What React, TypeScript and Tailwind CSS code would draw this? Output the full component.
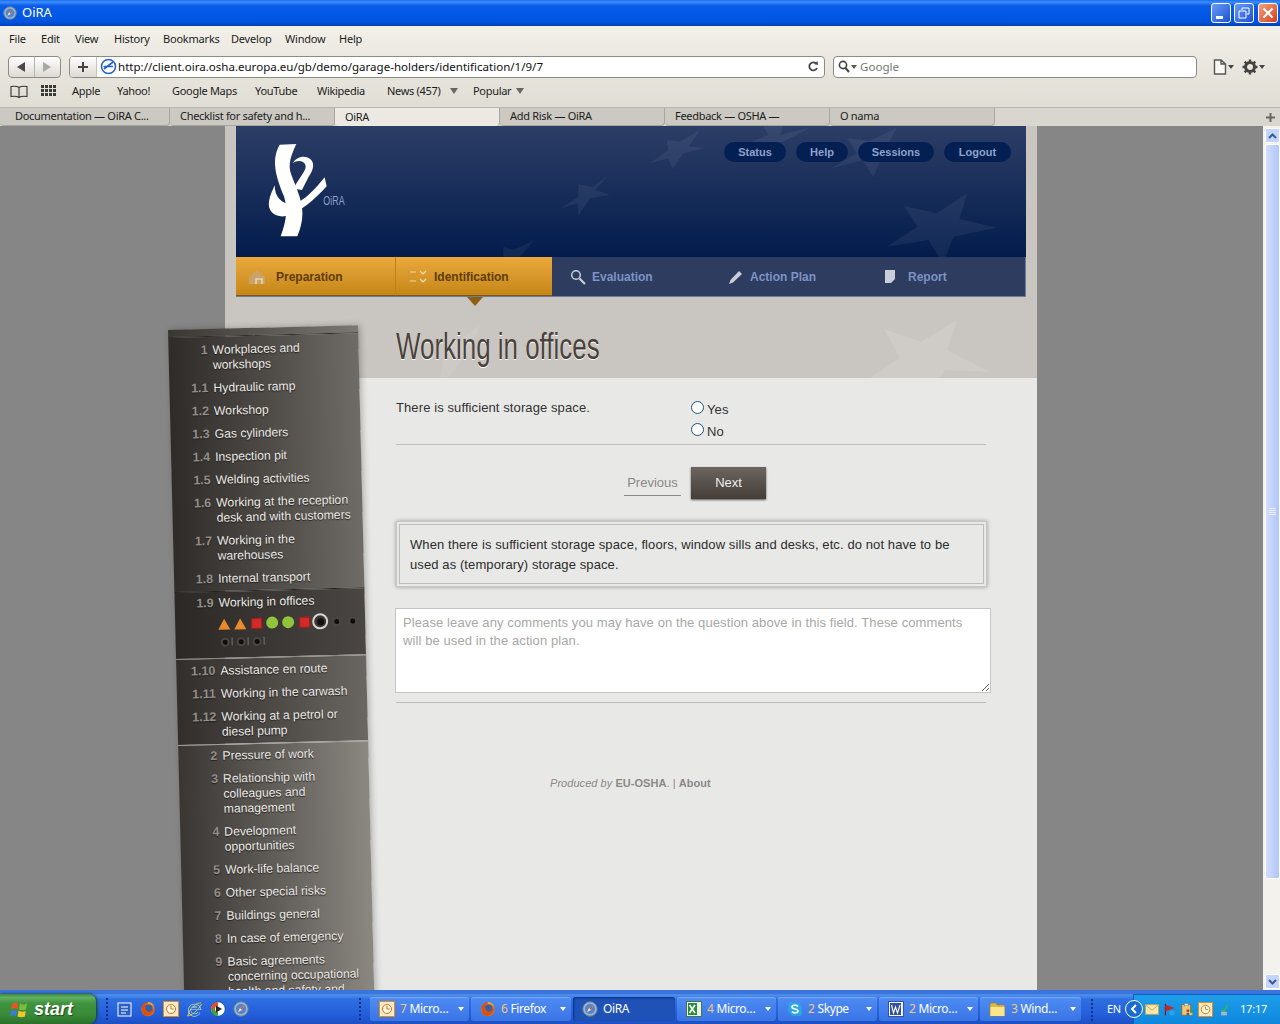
import React from "react";

const pts = (ox: number, oy: number, k: number, list: number[][], lx: number, ly: number) =>
  list.map(([x, y]) => `${ox + x / k - lx},${oy + y / k - ly}`).join(" ");

const Safari = ({ s = 16 }: { s?: number }) => (
  <svg width={s} height={s} viewBox="0 0 16 16" className="shrink-0">
    <circle cx="8" cy="8" r="7.2" fill="#9fb4c9" stroke="#6d7f94" />
    <circle cx="8" cy="8" r="5" fill="#4f86c9" />
    <path d="M11 5 L9 9 L5 11 L7 7 Z" fill="#e9edf2" />
    <path d="M11 5 L9 9 L7 7 Z" fill="#d9482f" />
  </svg>
);
const Firefox = ({ s = 16 }: { s?: number }) => (
  <svg width={s} height={s} viewBox="0 0 16 16" className="shrink-0">
    <circle cx="8" cy="8.5" r="6.8" fill="#e8701a" />
    <circle cx="8.5" cy="7.5" r="4" fill="#3a5fa8" />
    <path d="M2 5 C3 2 6 1 8 1 C6 3 5 4 5 6 C6 12 11 12 14 7 C14 12 10 15 7 15 C3 15 1 10 2 5 Z" fill="#d9530f" />
    <path d="M8 1 C11 1 14 3 14.5 7 C13 4 11 3 8 3 Z" fill="#f4a428" />
  </svg>
);
const ClockBox = ({ s = 16 }: { s?: number }) => (
  <svg width={s} height={s} viewBox="0 0 16 16" className="shrink-0">
    <rect x="0.5" y="0.5" width="15" height="15" fill="#fbe9c4" stroke="#e48a1a" />
    <circle cx="8" cy="8" r="4.5" fill="#fff6e0" stroke="#c9771a" />
    <path d="M8 5 V8 H10.5" stroke="#c9771a" fill="none" />
  </svg>
);
const IE = () => (
  <svg width="17" height="17" viewBox="0 0 17 17" className="shrink-0">
    <path d="M13 11.5 A5 5 0 1 1 13.3 7.5 H4.5" fill="none" stroke="#cfe6ff" strokeWidth="3" />
    <path d="M13 11.5 A5 5 0 1 1 13.3 7.5 H4.5" fill="none" stroke="#1f74d8" strokeWidth="2" />
    <path d="M15 2 C11 1 3 7 1.8 15 C5 14.5 13 9 15.5 3" fill="none" stroke="#efc230" strokeWidth="1" />
  </svg>
);
const Media = () => (
  <svg width="16" height="16" viewBox="0 0 16 16" className="shrink-0">
    <circle cx="8" cy="8" r="7.3" fill="#fff" stroke="#1e4fa0" />
    <path d="M1 8 A7 7 0 0 1 8 1 V5 A3 3 0 0 0 5 8 Z" fill="#e0502a" />
    <path d="M8 15 A7 7 0 0 1 1 8 H5 A3 3 0 0 0 8 11 Z" fill="#3aa040" />
    <path d="M6 4.5 L12 8 L6 11.5 Z" fill="#222" />
  </svg>
);
const Excel = () => (
  <svg width="16" height="16" viewBox="0 0 16 16" className="shrink-0">
    <rect x="0.5" y="0.5" width="15" height="15" fill="#e8f2e4" stroke="#46774b" />
    <rect x="2" y="2" width="9" height="12" fill="#2c8a3f" />
    <path d="M3.5 4 L9 12 M9 4 L3.5 12" stroke="#fff" strokeWidth="1.6" />
  </svg>
);
const Skype = () => (
  <svg width="16" height="16" viewBox="0 0 16 16" className="shrink-0">
    <circle cx="8" cy="8" r="7" fill="#29a6e6" />
    <circle cx="4" cy="4" r="3" fill="#29a6e6" />
    <circle cx="12" cy="12" r="3" fill="#29a6e6" />
    <path d="M11 5.5 C9 3.5 5 4 5 6 C5 8.5 11 7.5 11 10 C11 12 7 12.5 5 10.5" fill="none" stroke="#fff" strokeWidth="1.7" />
  </svg>
);
const Word = () => (
  <svg width="16" height="16" viewBox="0 0 16 16" className="shrink-0">
    <rect x="0.5" y="0.5" width="15" height="15" fill="#f0f4fb" stroke="#39509a" />
    <rect x="2" y="2" width="11" height="12" fill="#34519f" />
    <path d="M3.5 4 L5.5 12 L7.5 6 L9.5 12 L12 4" stroke="#fff" fill="none" strokeWidth="1.1" />
  </svg>
);
const Folder = () => (
  <svg width="17" height="15" viewBox="0 0 17 15" className="shrink-0">
    <path d="M1 3 L2 1 H7 L8 3 H15.5 V14 H1 Z" fill="#e0b73e" stroke="#a9852a" strokeWidth="0.7" />
    <rect x="1.5" y="5" width="14" height="9" fill="#fbe58a" />
  </svg>
);

const Sep = ({ cls = "" }: { cls?: string }) => (
  <div className={`flex flex-col gap-[2px] w-[2px] ${cls}`}>
    {[0, 1, 2, 3, 4, 5].map((i) => (
      <span key={i} className="w-[2px] h-[2px] bg-[#0d2f8a]" />
    ))}
  </div>
);

const TaskBtn = ({ icon, n, label, active, w = 99 }: { icon: React.ReactNode; n?: string; label: string; active?: boolean; w?: number }) => (
  <div
    style={{ width: w }}
    className={`h-[24px] rounded-[3px] flex items-center pl-[9px] pr-[5px] text-[12px] tracking-[-0.4px] text-white gap-[5px] shrink-0 ${
      active ? "bg-[#1e52b7] shadow-[inset_1px_1px_2px_#0f2f80]" : "bg-gradient-to-b from-[#4f8cf2] to-[#3a74e6] shadow-[inset_0_1px_0_#78a8f5]"
    }`}
  >
    {icon}
    <span className="whitespace-nowrap">
      {n && <span className="text-[#f6c77d] mr-[3px]">{n}</span>}
      {label}
    </span>
    {!active && <span className="ml-auto w-0 h-0 border-x-[3px] border-x-transparent border-t-[4px] border-t-white" />}
  </div>
);

type Row = { n: string; t: string[] };
const g1: Row[] = [
  { n: "1", t: ["Workplaces and", "workshops"] },
  { n: "1.1", t: ["Hydraulic ramp"] },
  { n: "1.2", t: ["Workshop"] },
  { n: "1.3", t: ["Gas cylinders"] },
  { n: "1.4", t: ["Inspection pit"] },
  { n: "1.5", t: ["Welding activities"] },
  { n: "1.6", t: ["Working at the reception", "desk and with customers"] },
  { n: "1.7", t: ["Working in the", "warehouses"] },
  { n: "1.8", t: ["Internal transport"] },
];
const g2: Row[] = [
  { n: "1.10", t: ["Assistance en route"] },
  { n: "1.11", t: ["Working in the carwash"] },
  { n: "1.12", t: ["Working at a petrol or", "diesel pump"] },
];
const g3: Row[] = [
  { n: "2", t: ["Pressure of work"] },
  { n: "3", t: ["Relationship with", "colleagues and", "management"] },
  { n: "4", t: ["Development", "opportunities"] },
  { n: "5", t: ["Work-life balance"] },
  { n: "6", t: ["Other special risks"] },
  { n: "7", t: ["Buildings general"] },
  { n: "8", t: ["In case of emergency"] },
  { n: "9", t: ["Basic agreements", "concerning occupational", "health and safety and"] },
];

const SideRow = ({ r }: { r: Row }) => (
  <div className="flex py-[4px]">
    <span className="w-[39px] shrink-0 text-right font-bold text-[12.5px] leading-[15px] text-[#938e89] [text-shadow:0_1px_1px_#222]">{r.n}</span>
    <span className="ml-[5px] text-[12.2px] leading-[15px] text-[#ecebe8] whitespace-nowrap [text-shadow:0_1px_1px_#1f1c1a]">
      {r.t.map((l) => (
        <div key={l}>{l}</div>
      ))}
    </span>
  </div>
);

const Cell = ({ children, sep }: { children: React.ReactNode; sep?: boolean }) => (
  <span className="relative w-[16px] h-[16px] flex items-center justify-center shrink-0">
    {children}
    {sep && <span className="absolute right-0 top-[4px] w-px h-[8px] bg-[#77736e]" />}
  </span>
);
const Tri = () => <span className="block w-0 h-0 border-x-[6px] border-x-transparent border-b-[11px] border-b-[#ea8a2e]" />;
const Sq = () => <span className="block w-[11px] h-[11px] bg-[#d42a2a] border border-[#8d2020]" />;
const Gr = () => <span className="block w-[12px] h-[12px] rounded-full bg-[#8fc53a]" />;
const Dot = () => <span className="block w-[5px] h-[5px] rounded-full bg-[#0f0e0d] shadow-[0_0_0_2px_#4a4643]" />;

const menu: [string, string][] = [
  ["File", "w-[32px]"],
  ["Edit", "w-[34px]"],
  ["View", "w-[39px]"],
  ["History", "w-[49px]"],
  ["Bookmarks", "w-[68px]"],
  ["Develop", "w-[54px]"],
  ["Window", "w-[54px]"],
  ["Help", "w-[34px]"],
];
const tabs = [
  ["Documentation — OiRA C...", "w-[170px] pl-[15px]"],
  ["Checklist for safety and h...", "w-[165px] pl-[10px]"],
  ["OiRA", "w-[165px] pl-[10px]"],
  ["Add Risk — OiRA", "w-[165px] pl-[10px]"],
  ["Feedback — OSHA —", "w-[165px] pl-[10px]"],
  ["O nama", "w-[165px] pl-[10px]"],
];

export default function App() {
  return (
    <div className="w-[1280px] h-[1024px] overflow-hidden flex flex-col font-['Liberation_Sans',sans-serif] bg-[#868686]">
      {/* window title */}
      <div className="h-[26px] shrink-0 flex items-center pl-[3px] pr-[2px] bg-[linear-gradient(#1a6ef0_0%,#3d8dfb_8%,#0a5ce8_22%,#0058e6_60%,#0052dc_85%,#0042b8_100%)]">
        <Safari s={14} />
        <span className="ml-[5px] text-[13px] text-white font-['Noto_Sans',sans-serif]">OiRA</span>
        <div className="ml-auto flex">
          <div className="w-[20px] h-[20px] rounded-[3px] border border-white bg-gradient-to-br from-[#6a9cf5] to-[#1c50d0] flex items-end pl-[4px] pb-[3px]">
            <span className="w-[7px] h-[3px] bg-white" />
          </div>
          <div className="ml-[3px] w-[20px] h-[20px] rounded-[3px] border border-white bg-gradient-to-br from-[#6a9cf5] to-[#1c50d0] flex items-center justify-center">
            <svg width="12" height="12" viewBox="0 0 12 12"><path d="M4 3V1H11V7H8.5M1 4H8V11H1Z" fill="none" stroke="#fff" /></svg>
          </div>
          <div className="ml-[4px] w-[20px] h-[20px] rounded-[3px] border border-white bg-gradient-to-br from-[#f0a080] to-[#d23a12] flex items-center justify-center">
            <svg width="12" height="12" viewBox="0 0 12 12"><path d="M1.5 1.5L10.5 10.5M10.5 1.5L1.5 10.5" stroke="#fff" strokeWidth="2" /></svg>
          </div>
        </div>
      </div>

      {/* browser chrome */}
      <div className="shrink-0 h-[81px] bg-gradient-to-b from-[#f3f0e9] to-[#e0ddd5] font-['Noto_Sans',sans-serif] text-[11px] text-[#1c1c1c]">
        <div className="h-[26px] flex items-center pl-[9px] tracking-[-0.2px]">
          {menu.map(([m, w]) => <span key={m} className={w}>{m}</span>)}
        </div>
        <div className="h-[28px] flex items-center pl-[8px] pt-[1px]">
          <div className="w-[53px] h-[22px] rounded-[4px] border border-[#8d8b84] bg-gradient-to-b from-white to-[#dcdad4] flex items-center">
            <span className="w-[26px] flex justify-center border-r border-[#b5b3ac] h-full items-center">
              <span className="w-0 h-0 border-y-[5px] border-y-transparent border-r-[8px] border-r-[#4a4a4a]" />
            </span>
            <span className="w-[26px] flex justify-center">
              <span className="w-0 h-0 border-y-[5px] border-y-transparent border-l-[8px] border-l-[#a8a8a4]" />
            </span>
          </div>
          <div className="ml-[8px] w-[756px] h-[22px] rounded-[4px] border border-[#8d8b84] bg-white flex items-center overflow-hidden">
            <span className="w-[27px] h-full flex items-center justify-center bg-gradient-to-b from-white to-[#dcdad4] border-r border-[#c8c6c0]">
              <svg width="12" height="12" viewBox="0 0 12 12"><path d="M6 1V11M1 6H11" stroke="#444" strokeWidth="2" /></svg>
            </span>
            <svg width="17" height="17" viewBox="0 0 17 17" className="ml-[3px] shrink-0">
              <circle cx="8.5" cy="8.5" r="7" fill="#fff" stroke="#2563c9" strokeWidth="1.6" />
              <path d="M4 11 L13 4 M3.5 8.5 H13" stroke="#2563c9" strokeWidth="1.6" />
            </svg>
            <span className="ml-[1px] mt-[1px] text-[11.55px] text-[#111]">http://client.oira.osha.europa.eu/gb/demo/garage-holders/identification/1/9/7</span>
            <svg width="12" height="13" viewBox="0 0 12 13" className="ml-auto mr-[5px]">
              <path d="M9.5 4 A4 4 0 1 0 10 8" fill="none" stroke="#444" strokeWidth="1.8" />
              <path d="M7 4 L11 5 L10.5 1 Z" fill="#444" />
            </svg>
          </div>
          <div className="ml-[8px] w-[364px] h-[22px] rounded-[4px] border border-[#8d8b84] bg-white flex items-center pl-[4px]">
            <svg width="12" height="13" viewBox="0 0 12 13"><circle cx="5" cy="5" r="3.6" fill="none" stroke="#444" strokeWidth="1.6" /><path d="M7.5 8 L11 12" stroke="#444" strokeWidth="2" /></svg>
            <span className="ml-[1px] w-0 h-0 border-x-[3px] border-x-transparent border-t-[4px] border-t-[#555]" />
            <span className="ml-[3px] text-[11.6px] text-[#777]">Google</span>
          </div>
          <svg width="14" height="16" viewBox="0 0 14 16" className="ml-[16px]"><path d="M1.5 1 H8 L12.5 5 V15 H1.5 Z M8 1 V5 H12.5" fill="#f8f8f4" stroke="#555" strokeWidth="1.4" /></svg>
          <span className="ml-[1px] w-0 h-0 border-x-[3px] border-x-transparent border-t-[4px] border-t-[#444]" />
          <svg width="16" height="16" viewBox="0 0 16 16" className="ml-[8px]">
            <circle cx="8" cy="8" r="4.5" fill="none" stroke="#444" strokeWidth="3" />
            <path d="M8 0.5V3.5M8 12.5V15.5M0.5 8H3.5M12.5 8H15.5M2.7 2.7L4.8 4.8M11.2 11.2L13.3 13.3M13.3 2.7L11.2 4.8M4.8 11.2L2.7 13.3" stroke="#444" strokeWidth="2.4" />
          </svg>
          <span className="ml-[1px] w-0 h-0 border-x-[3px] border-x-transparent border-t-[4px] border-t-[#444]" />
        </div>
        <div className="h-[27px] flex items-center pl-[10px] pb-[5px] tracking-[-0.3px]">
          <svg width="18" height="13" viewBox="0 0 18 13"><path d="M9 2.5 C7 1 4 1 1 1.5 V11.5 C4 11 7 11 9 12.5 C11 11 14 11 17 11.5 V1.5 C14 1 11 1 9 2.5 V12.5" fill="none" stroke="#333" strokeWidth="1.1" /></svg>
          <svg width="15" height="12" viewBox="0 0 15 12" className="ml-[13px]" fill="#3a3a3a">
            {[0, 4, 8].map((y) => [0, 4, 8, 12].map((x) => <rect key={`${x}-${y}`} x={x} y={y} width="3" height="3" />))}
          </svg>
          <span className="ml-[16px] w-[45px]">Apple</span>
          <span className="w-[55px]">Yahoo!</span>
          <span className="w-[83px]">Google Maps</span>
          <span className="w-[62px]">YouTube</span>
          <span className="w-[70px]">Wikipedia</span>
          <span className="w-[63px]">News (457)</span>
          <span className="w-0 h-0 border-x-[4px] border-x-transparent border-t-[6px] border-t-[#666]" />
          <span className="ml-[15px] w-[43px]">Popular</span>
          <span className="w-0 h-0 border-x-[4px] border-x-transparent border-t-[6px] border-t-[#666]" />
        </div>
      </div>

      {/* tab strip */}
      <div className="shrink-0 h-[19px] flex bg-[#d8d6cf] border-t border-[#b8b6b0] font-['Noto_Sans',sans-serif] text-[11px] tracking-[-0.3px] text-[#1c1c1c]">
        {tabs.map(([t, c]) => (
          <div
            key={t}
            className={`${c} shrink-0 flex items-center whitespace-nowrap rounded-b-[4px] border-r border-b border-[#a8a69f] ${
              t === "OiRA" ? "bg-[#ece9e2] border-b-0" : "bg-[#cbc9c1]"
            }`}
          >
            {t}
          </div>
        ))}
        <svg width="9" height="9" viewBox="0 0 9 9" className="ml-auto mr-[5px] self-center"><path d="M4.5 0V9M0 4.5H9" stroke="#666" strokeWidth="2" /></svg>
      </div>

      {/* page + scrollbar */}
      <div className="flex-1 min-h-0 flex">
        <div className="relative flex-1 overflow-hidden bg-[#868686]">
          <div className="relative ml-[225px] w-[812px] h-full bg-[#e8e8e6]">
            <div className="relative h-[252px] bg-[#c9c5c0] overflow-hidden">
              <svg width="812" height="252" className="absolute left-0 top-0 pointer-events-none">
                <polygon fill="#fff" opacity="0.12" points="659,203 696,216 732,194 722,224 765,246 720,244 715,252 645,252 675,232" />
                <polygon fill="#fff" opacity="0.08" points="255,199 220,224 215,252 223,252 245,224" />
              </svg>
              <div className="mx-[11px] relative">
                <div className="relative h-[131px] overflow-hidden bg-gradient-to-b from-[#2c3e66] to-[#041c4c]">
                  <svg width="790" height="131" className="absolute left-0 top-0">
                    <g fill="#fff" opacity="0.055">
                      <polygon points={pts(640, 125, 3, [[982, 205], [890, 265], [792, 243], [833, 305], [740, 365], [865, 345], [910, 415], [940, 335], [1070, 308], [958, 282]], 236, 126)} />
                      <polygon points={pts(640, 125, 3, [[180, 15], [145, 65], [195, 68], [130, 85], [97, 132], [85, 100], [30, 115], [85, 75], [80, 45], [120, 50]], 236, 126)} />
                      <polygon points={pts(640, 125, 3, [[770, 8], [735, 75], [700, 157], [668, 105], [575, 130], [650, 85], [622, 40], [690, 48]], 236, 126)} />
                      <polygon points={pts(640, 125, 3, [[335, 50], [385, 30], [370, 3], [430, 3], [420, 30], [510, 8], [430, 50], [400, 52]], 236, 126)} />
                      <polygon points={pts(225, 125, 3, [[1152, 150], [1105, 185], [1060, 178], [1060, 215], [1008, 250], [1058, 235], [1060, 272], [1095, 220], [1155, 210], [1110, 195]], 236, 126)} />
                      <polygon points={pts(225, 125, 3, [[925, 348], [865, 375], [835, 365], [835, 395], [885, 395]], 236, 126)} />
                    </g>
                  </svg>
                  <svg width="78.3" height="95" viewBox="130 55 235 285" className="absolute left-[32px] top-[17px] overflow-visible">
                    <path d="M165 60 L215 58 C200 90 188 120 200 150 C215 190 240 240 232 285 C228 310 222 325 218 335 L168 335 C185 290 190 255 178 215 C160 170 135 110 165 60 Z" fill="#fff" />
                    <path d="M300 158 L306 185 C270 225 225 265 180 275 C150 278 128 260 133 230 C136 210 145 195 150 182 C150 215 170 240 205 240 C240 228 270 195 300 158 Z" fill="#fff" />
                    <path d="M206 192 C228 152 248 135 242 120 C236 106 216 106 204 116 C214 96 240 90 256 102 C272 116 266 136 252 156 L232 196 Z" fill="#fff" />
                    <text x="296" y="240" fontSize="36" fill="#8ea2cc" fontFamily="Liberation Sans" textLength="64" lengthAdjust="spacingAndGlyphs">OiRA</text>
                  </svg>
                  <div className="absolute top-[16px] right-[15px] flex gap-[10px] text-[11px] font-bold text-[#8ea2cc]">
                    <span className="w-[62px] h-[20px] rounded-full bg-[#041f52] flex items-center justify-center">Status</span>
                    <span className="w-[52px] h-[20px] rounded-full bg-[#041f52] flex items-center justify-center">Help</span>
                    <span className="w-[76px] h-[20px] rounded-full bg-[#041f52] flex items-center justify-center">Sessions</span>
                    <span className="w-[67px] h-[20px] rounded-full bg-[#041f52] flex items-center justify-center">Logout</span>
                  </div>
                </div>
                <div className="relative h-[40px] flex text-[12px] font-bold bg-[#2d3c5f] border-b border-r border-[#6f7d9c]">
                  <div className="w-[159px] flex items-center bg-gradient-to-b from-[#eba93b] to-[#c58616] text-[#5e3d08] border-b border-[#7c5510] pl-[12px] pt-[1px]">
                    <svg width="18" height="16" viewBox="0 0 18 16"><path d="M9 1 L17 8 V15 H1 V8 Z" fill="#c9a368" /><path d="M8 15 V10 H14 V15" fill="none" stroke="#f3e7cf" strokeWidth="1.2" /></svg>
                    <span className="ml-[10px]">Preparation</span>
                  </div>
                  <div className="relative w-[157px] flex items-center bg-gradient-to-b from-[#eba93b] to-[#c58616] text-[#5e3d08] border-b border-[#7c5510] border-l border-l-[#b98419] pl-[14px] pt-[1px]">
                    <svg width="18" height="16" viewBox="0 0 18 16" className="shrink-0"><path d="M0 3H6M0 12H6" stroke="#e8d4a5" /><path d="M10 2L13 5L16 2M10 10L13 13L16 10" fill="none" stroke="#f2e2ba" strokeWidth="1.2" /></svg>
                    <span className="ml-[6px]">Identification</span>
                  </div>
                  <div className="w-[158px] flex items-center text-[#7d93c4] pl-[18px]">
                    <svg width="16" height="16" viewBox="0 0 16 16"><circle cx="6" cy="6" r="4.3" fill="none" stroke="#c8ced8" strokeWidth="1.5" /><path d="M9.5 9.5L15 15" stroke="#c8ced8" strokeWidth="2.2" /></svg>
                    <span className="ml-[6px]">Evaluation</span>
                  </div>
                  <div className="w-[158px] flex items-center text-[#7d93c4] pl-[18px]">
                    <svg width="16" height="16" viewBox="0 0 16 16"><path d="M1 15 L2.5 11 L11 2 L14 5 L5 13.5 Z" fill="#c8ced8" /></svg>
                    <span className="ml-[6px]">Action Plan</span>
                  </div>
                  <div className="flex items-center text-[#7d93c4] pl-[16px]">
                    <svg width="12" height="15" viewBox="0 0 12 15"><path d="M1 1 H11 V10 L7 14 H1 Z" fill="#c8ced8" /></svg>
                    <span className="ml-[12px]">Report</span>
                  </div>
                  <span className="absolute left-[231px] top-[40px] w-0 h-0 border-x-[8px] border-x-transparent border-t-[9px] border-t-[#8e5f10]" />
                </div>
              </div>
              <h1 className="absolute left-[171px] top-[197px] origin-left scale-x-[0.72] text-[36px] leading-[48px] text-[#4a423c] whitespace-nowrap [text-shadow:0_1px_0_#ffffff]">
                Working in offices
              </h1>
            </div>

            <div className="pl-[171px] w-[761px] text-[13px] text-[#333]">
              <div className="flex pt-[21px] h-[67px] border-b border-[#bdbdbb] tracking-[0.1px]">
                <p className="w-[295px] leading-[18px]">There is sufficient storage space.</p>
                <div className="flex flex-col gap-[9px] mt-[2px]">
                  <label className="flex items-start h-[13px] gap-[3px]">
                    <span className="w-[13px] h-[13px] rounded-full border border-[#1c5180] bg-white shrink-0" />
                    <span className="leading-[18px]">Yes</span>
                  </label>
                  <label className="flex items-start h-[13px] gap-[3px]">
                    <span className="w-[13px] h-[13px] rounded-full border border-[#1c5180] bg-white shrink-0" />
                    <span className="leading-[18px]">No</span>
                  </label>
                </div>
              </div>
              <div className="mt-[22px] flex h-[32px] items-center pl-[228px]">
                <span className="w-[57px] h-[24px] text-center leading-[22px] mt-[1px] border-b border-[#8a8a88] text-[#8a8885] mr-[10px]">Previous</span>
                <span className="w-[75px] h-[32px] flex items-center justify-center text-[#efeeec] bg-gradient-to-b from-[#6d655f] to-[#443e39] shadow-[0_1px_2px_#555]">Next</span>
              </div>
              <div className="mt-[22px] h-[66px] w-[591px] border border-[#c6c6c4] p-[2px] shadow-[0_0_4px_#999] bg-[#e8e8e6]">
                <div className="h-full border border-[#bdbdbb] pl-[10px] pt-[10px] leading-[20px] text-[#2c2c2c] tracking-[0.1px] whitespace-nowrap">
                  When there is sufficient storage space, floors, window sills and desks, etc. do not have to be<br />used as (temporary) storage space.
                </div>
              </div>
              <textarea
                readOnly
                className="mt-[21px] -ml-[1px] block w-[596px] h-[85px] border border-[#c4c4c2] bg-white px-[7px] py-[5px] text-[13px] leading-[18px] tracking-[0.1px] placeholder:text-[#a8a8a6] outline-none"
                placeholder="Please leave any comments you may have on the question above in this field. These comments will be used in the action plan."
              />
              <div className="mt-[9px] w-[590px] h-px bg-[#bdbdbb]" />
              <p className="mt-[73px] ml-[154px] text-[11px] leading-[14px] tracking-[0.05px] text-[#8b8986] whitespace-nowrap">
                <i>Produced by</i> <b className="font-bold">EU-OSHA</b>. | <b className="font-bold">About</b>
              </p>
            </div>
          </div>

          {/* slanted navigation */}
          <div className="absolute left-[168px] top-[204px] w-[190px] origin-top-left -rotate-[1.4deg] h-[680px] shadow-[2px_0_6px_rgba(0,0,0,0.25)]">
            <div className="h-[8px] bg-gradient-to-r from-[#3a3632] to-[#7c7873] border-b border-[#2c2926]" />
            <div className="pt-[2px] bg-gradient-to-r from-[#2f2b28] to-[#6f6b66]">
              {g1.map((r) => <SideRow key={r.n} r={r} />)}
            </div>
            <div className="h-[67px] bg-gradient-to-r from-[#2b2825] to-[#4a4643] border-t border-[#23201e]">
              <SideRow r={{ n: "1.9", t: ["Working in offices"] }} />
              <div className="flex flex-wrap pl-[41px] gap-y-[2px] w-[190px] mt-[1px]">
                <Cell><Tri /></Cell>
                <Cell><Tri /></Cell>
                <Cell><Sq /></Cell>
                <Cell><Gr /></Cell>
                <Cell><Gr /></Cell>
                <Cell><Sq /></Cell>
                <Cell>
                  <span className="w-[16px] h-[16px] rounded-full border-2 border-[#d8d6d2] bg-[#3a3734] flex items-center justify-center"><span className="w-[7px] h-[7px] rounded-full bg-[#111]" /></span>
                </Cell>
                <Cell><Dot /></Cell>
                <Cell><Dot /></Cell>
                <Cell sep><Dot /></Cell>
                <Cell sep><Dot /></Cell>
                <Cell sep><Dot /></Cell>
              </div>
            </div>
            <div className="pt-[1px] border-t border-[#8b8783] bg-gradient-to-r from-[#322e2b] to-[#6a6661]">
              {g2.map((r) => <SideRow key={r.n} r={r} />)}
            </div>
            <div className="border-t border-[#a09c97] pb-[40px] bg-gradient-to-r from-[#3a3633] to-[#8b8781]">
              {g3.map((r) => <SideRow key={r.n} r={r} />)}
            </div>
          </div>
        </div>

        {/* scrollbar */}
        <div className="w-[17px] shrink-0 bg-[#f4f2ec] flex flex-col items-center pt-[2px] pb-[1px] pl-[1px]">
          <div className="w-[15px] h-[15px] rounded-[2px] bg-[#c4d5fb] border border-white flex items-center justify-center">
            <svg width="9" height="6" viewBox="0 0 9 6"><path d="M1 5L4.5 1.5L8 5" fill="none" stroke="#3c5a9a" strokeWidth="2" /></svg>
          </div>
          <div className="mt-[1px] w-[15px] h-[735px] rounded-[2px] bg-gradient-to-r from-[#d2defb] via-[#c0d2fb] to-[#b0c6f5] border border-white flex flex-col items-center justify-center gap-[1px]">
            {[0, 1, 2, 3].map((i) => <span key={i} className="w-[7px] h-px bg-[#e8effd]" />)}
          </div>
          <div className="mt-auto w-[15px] h-[15px] rounded-[2px] bg-[#c4d5fb] border border-white flex items-center justify-center">
            <svg width="9" height="6" viewBox="0 0 9 6"><path d="M1 1L4.5 4.5L8 1" fill="none" stroke="#3c5a9a" strokeWidth="2" /></svg>
          </div>
        </div>
      </div>

      {/* taskbar */}
      <div className="relative shrink-0 h-[34px] pt-[4px] flex items-center bg-[linear-gradient(#3a74dc_0%,#3a74dc_11%,#4f91ee_14%,#2e6fe0_28%,#245edb_72%,#1c4fc2_100%)] font-['Noto_Sans',sans-serif]">
        <div className="w-[96px] h-full rounded-r-[8px] bg-[linear-gradient(#3d8b3d_0%,#62b062_12%,#3f943f_30%,#388a38_70%,#2a702a_100%)] flex items-center pl-[10px] gap-[5px] shadow-[1px_0_3px_#143f14]">
          <svg width="19" height="19" viewBox="0 0 19 19">
            <path d="M2 4 C4 2.5 6 2.5 8.5 3.5 L7.5 9 C5.5 8 3.5 8 1 9.5 Z" fill="#e8532a" />
            <path d="M10 3.5 C12.5 5 14.5 5 17 3.5 L16 9.5 C14 10.5 11.5 10.5 9 9.5 Z" fill="#7dbb3c" />
            <path d="M1 11 C3.5 10 5 10 7 10.5 L6 16 C4 15 2 15 0 16.5 Z" fill="#3b7bd9" />
            <path d="M8.5 10.8 C11 12 13.5 12 15.7 11 L15 16.5 C12.5 17.5 10 17.5 7.5 16.5 Z" fill="#f2c62d" />
          </svg>
          <span className="text-white italic font-bold text-[18px] [text-shadow:1px_1px_1px_#1d4d1d] font-['Liberation_Sans',sans-serif]">start</span>
        </div>
        <Sep cls="ml-[10px]" />
        <div className="ml-[9px] flex items-center gap-[7px]">
          <svg width="16" height="16" viewBox="0 0 16 16"><rect x="1" y="2" width="13" height="13" fill="#2a5fc2" stroke="#fff" /><path d="M4 6H11M4 9H11M4 12H9" stroke="#fff" /></svg>
          <Firefox />
          <ClockBox />
          <IE />
          <Media />
          <Safari />
        </div>
        <Sep cls="ml-[110px]" />
        <div className="absolute left-[370px] top-[7px] flex gap-[2px]">
          <TaskBtn icon={<ClockBox />} n="7" label="Micro…" />
          <TaskBtn icon={<Firefox />} n="6" label="Firefox" w={100} />
          <TaskBtn icon={<Safari />} label="OiRA" active w={102} />
          <TaskBtn icon={<Excel />} n="4" label="Micro…" />
          <TaskBtn icon={<Skype />} n="2" label="Skype" />
          <TaskBtn icon={<Word />} n="2" label="Micro…" />
          <TaskBtn icon={<Folder />} n="3" label="Wind…" w={101} />
        </div>
        <div className="absolute left-[1091px] top-[9px]"><Sep /></div>
        <span className="absolute left-[1107px] top-[12px] text-[11px] leading-[14px] tracking-[-0.3px] text-white">EN</span>
        <div className="absolute left-[1133px] top-[4px] bottom-0 right-0 bg-gradient-to-b from-[#1e9eea] to-[#0f87dd] border-t border-l border-[#0b5fb8] flex items-center pl-[11px]">
          <svg width="14" height="11" viewBox="0 0 16 12" className="shrink-0"><rect x="0.5" y="0.5" width="15" height="11" fill="#fbe7a6" stroke="#bfa45b" /><path d="M1 1L8 7L15 1" fill="none" stroke="#bfa45b" /></svg>
          <svg width="13" height="15" viewBox="0 0 16 16" className="ml-[4px] shrink-0"><path d="M3 1V15" stroke="#7a1010" strokeWidth="1.4" /><path d="M3 2L14 6L3 10Z" fill="#d2201f" /><circle cx="11" cy="12" r="3.2" fill="#29a6e6" /></svg>
          <svg width="13" height="15" viewBox="0 0 16 16" className="ml-[5px] shrink-0"><rect x="1" y="2" width="11" height="13" fill="#e8c878" stroke="#8a6a2a" /><rect x="4" y="0.5" width="5" height="3" fill="#ddd" stroke="#666" strokeWidth="0.5" /><rect x="7" y="8" width="3" height="3" fill="#d2301f" /><rect x="11" y="8" width="3" height="3" fill="#3ca040" /><rect x="7" y="12" width="3" height="3" fill="#2a5fc2" /><rect x="11" y="12" width="3" height="3" fill="#f2c62d" /></svg>
          <span className="ml-[4px]"><ClockBox s={15} /></span>
          <svg width="10" height="16" viewBox="0 0 14 17" className="ml-[6px] shrink-0"><path d="M3 8L6 11L12 2" fill="none" stroke="#30c040" strokeWidth="2" /><rect x="3" y="11" width="8" height="5" fill="#a8b4cc" /></svg>
          <span className="ml-[11px] text-[11px] tracking-[-0.2px] text-white">17:17</span>
        </div>
        <span className="absolute left-[1125px] top-[10px] w-[18px] h-[18px] rounded-full bg-[#1a6ad2] border border-white flex items-center justify-center">
          <svg width="8" height="10" viewBox="0 0 8 10"><path d="M6 1L2 5L6 9" fill="none" stroke="#fff" strokeWidth="2" /></svg>
        </span>
      </div>
    </div>
  );
}
